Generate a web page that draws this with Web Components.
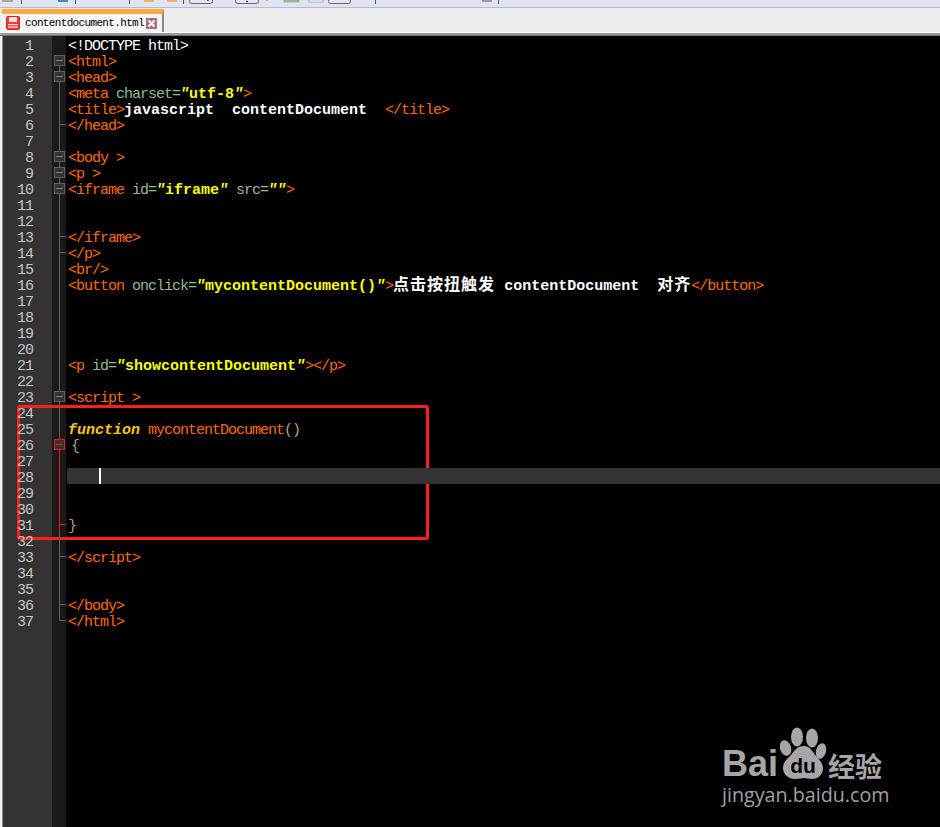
<!doctype html>
<html lang="zh">
<head>
<meta charset="UTF-8">
<title>contentdocument.html</title>
<style>
    html, body { margin: 0; height: 100%; background: #000; }
    body { overflow: hidden; }
</style>
</head>
<body>
<npp-window>
    <npp-toolbar slot="toolbar"></npp-toolbar>
    <npp-tabbar slot="tabs"><npp-tab label="contentdocument.html"></npp-tab></npp-tabbar>
    <npp-editor slot="editor">
        <code-line n="1"><span class="plain">&lt;!DOCTYPE html&gt;</span></code-line>
        <code-line n="2" fold="first"><span class="tag">&lt;html&gt;</span></code-line>
        <code-line n="3" fold="box"><span class="tag">&lt;head&gt;</span></code-line>
        <code-line n="4" fold="line"><span class="tag">&lt;meta </span><span class="attr">charset=</span><span class="q">"</span><span class="str">utf-8</span><span class="q">"</span><span class="tag">&gt;</span></code-line>
        <code-line n="5" fold="line"><span class="tag">&lt;title&gt;</span><span class="txt">javascript  contentDocument  </span><span class="tag">&lt;/title&gt;</span></code-line>
        <code-line n="6" fold="end"><span class="tag">&lt;/head&gt;</span></code-line>
        <code-line n="7" fold="line"></code-line>
        <code-line n="8" fold="box"><span class="tag">&lt;body &gt;</span></code-line>
        <code-line n="9" fold="box"><span class="tag">&lt;p &gt;</span></code-line>
        <code-line n="10" fold="box"><span class="tag">&lt;iframe </span><span class="attr">id=</span><span class="q">"</span><span class="str">iframe</span><span class="q">"</span><span class="attr"> src=</span><span class="q">""</span><span class="tag">&gt;</span></code-line>
        <code-line n="11" fold="line"></code-line>
        <code-line n="12" fold="line"></code-line>
        <code-line n="13" fold="end"><span class="tag">&lt;/iframe&gt;</span></code-line>
        <code-line n="14" fold="end"><span class="tag">&lt;/p&gt;</span></code-line>
        <code-line n="15" fold="line"><span class="tag">&lt;br/&gt;</span></code-line>
        <code-line n="16" fold="line"><span class="tag">&lt;button </span><span class="attr">onclick=</span><span class="q">"</span><span class="str">mycontentDocument()</span><span class="q">"</span><span class="tag">&gt;</span><span class="cjk">点击按扭触发</span><span class="txt"> contentDocument  </span><span class="cjk">对齐</span><span class="tag">&lt;/button&gt;</span></code-line>
        <code-line n="17" fold="line"></code-line>
        <code-line n="18" fold="line"></code-line>
        <code-line n="19" fold="line"></code-line>
        <code-line n="20" fold="line"></code-line>
        <code-line n="21" fold="line"><span class="tag">&lt;p </span><span class="attr">id=</span><span class="q">"</span><span class="str">showcontentDocument</span><span class="q">"</span><span class="tag">&gt;&lt;/p&gt;</span></code-line>
        <code-line n="22" fold="line"></code-line>
        <code-line n="23" fold="box"><span class="tag">&lt;script &gt;</span></code-line>
        <code-line n="24" fold="line"></code-line>
        <code-line n="25" fold="line"><span class="kw">function</span><span class="tag"> mycontentDocument</span><span class="op">()</span></code-line>
        <code-line n="26" fold="redbox"><span class="op brace">{</span></code-line>
        <code-line n="27" fold="redline"></code-line>
        <code-line n="28" fold="redline" current><span class="caret"></span></code-line>
        <code-line n="29" fold="redline"></code-line>
        <code-line n="30" fold="redline"></code-line>
        <code-line n="31" fold="redend"><span class="op">}</span></code-line>
        <code-line n="32" fold="line"></code-line>
        <code-line n="33" fold="end"><span class="tag">&lt;/script&gt;</span></code-line>
        <code-line n="34" fold="line"></code-line>
        <code-line n="35" fold="line"></code-line>
        <code-line n="36" fold="end"><span class="tag">&lt;/body&gt;</span></code-line>
        <code-line n="37" fold="last"><span class="tag">&lt;/html&gt;</span></code-line>
    </npp-editor>
    <red-mark slot="overlay"></red-mark>
    <baidu-mark slot="overlay"></baidu-mark>
</npp-window>
<script>
    class NppWindow extends HTMLElement {
        constructor() {
            super();
            this.attachShadow({mode: 'open'}).innerHTML = `
                <style>
                    :host { display: flex; flex-direction: column; position: relative; width: 940px; height: 827px; overflow: hidden; background: #000; }
                    .rule { height: 4px; flex: none; background: linear-gradient(#ffffff 0 1px, #9a9a9a 1px 3px, #707070 3px); }
                </style>
                <slot name="toolbar"></slot>
                <slot name="tabs"></slot>
                <div class="rule"></div>
                <slot name="editor"></slot>
                <slot name="overlay"></slot>`;
        }
    }

    // only the bottom edge of the toolbar is visible, the icons are cut off by the crop
    class NppToolbar extends HTMLElement {
        constructor() {
            super();
            const seps = [21, 75, 129, 183, 375, 498];
            const sepMarks = seps.map(x => `<rect x="${x}" y="0" width="1" height="4" fill="#555"/>`).join('');
            const framed = [189, 235, 328].map(x => `<path d="M${x + .5} 0v1.5q0 2 2 2h${x === 328 ? 18 : 19}q2 0 2-2V0" fill="#e4e6ee" stroke="#666"/>`).join('');
            this.attachShadow({mode: 'open'}).innerHTML = `
                <style>
                    :host { display: block; height: 8px; flex: none; background: #dfe4f3; box-sizing: border-box; border-bottom: 1px solid #b4bbd4; }
                    svg { display: block; }
                </style>
                <svg width="940" height="7" viewBox="0 0 940 7">
                    ${sepMarks}${framed}
                    <rect x="2" y="0" width="11" height="2" fill="#a9a9a9"/>
                    <rect x="58" y="0" width="10" height="2" fill="#4a86d0"/>
                    <rect x="144" y="0" width="10" height="2" fill="#f0b060"/>
                    <rect x="167" y="0" width="10" height="2" fill="#f0b060"/>
                    <rect x="207" y="0" width="2" height="1" fill="#3060c0"/>
                    <rect x="246" y="1" width="2" height="1" fill="#2020c0"/>
                    <rect x="266" y="0" width="2" height="1" fill="#f0b030"/>
                    <rect x="284" y="0" width="15" height="2" fill="#9cc49a" stroke="#7a8a7a" stroke-width=".5"/>
                    <rect x="309" y="0" width="14" height="2" fill="#fff" stroke="#777" stroke-width=".5"/>
                    <rect x="482" y="0" width="10" height="2" fill="#9c9c9c"/>
                </svg>`;
        }
    }

    class NppTabbar extends HTMLElement {
        constructor() {
            super();
            this.attachShadow({mode: 'open'}).innerHTML = `
                <style>
                    :host { display: flex; height: 24px; flex: none; background: #eeeeee; padding: 1px 0 0 2px; box-sizing: border-box; }
                </style>
                <slot></slot>`;
        }
    }

    class NppTab extends HTMLElement {
        constructor() {
            super();
            this.attachShadow({mode: 'open'}).innerHTML = `
                <style>
                    :host { display: flex; align-items: center; width: 162px; box-sizing: border-box; background: #f6f6f6; border-top: 5px solid #ffa93f; border-right: 2px solid #8a8a8a; padding: 0 5px 0 4px; }
                    .label { font: 11px "Liberation Mono", monospace; letter-spacing: -.65px; color: #000; margin-left: 5px; white-space: pre; flex: 1; }
                    svg { display: block; flex: none; }
                </style>
                <svg width="14" height="14" viewBox="0 0 14 14">
                    <rect x=".5" y=".5" width="13" height="13" rx="1.5" fill="#ee3b3b" stroke="#e02020"/>
                    <rect x="3" y="1" width="8" height="5" fill="#fbe3e3"/>
                    <rect x="2" y="8" width="10" height="1.2" fill="#fbe3e3"/>
                    <rect x="2" y="10.5" width="10" height="1.2" fill="#fbe3e3"/>
                </svg>
                <span class="label"></span>
                <svg width="11" height="11" viewBox="0 0 11 11">
                    <rect width="11" height="11" fill="#a5708c"/>
                    <path d="M2.5 2.5l6 6M8.5 2.5l-6 6" stroke="#fff" stroke-width="2"/>
                </svg>`;
            this.shadowRoot.querySelector('.label').textContent = this.getAttribute('label');
        }
    }

    class NppEditor extends HTMLElement {
        constructor() {
            super();
            this.attachShadow({mode: 'open'}).innerHTML = `
                <style>
                    :host { display: flex; flex-direction: column; flex: 1; min-height: 0; background: #000; position: relative;
                        font: 15px/22px "Liberation Mono", "Noto Sans CJK SC", monospace; letter-spacing: -1px; }
                    .rail { position: absolute; inset: 0 auto 0 0; width: 66px; z-index: 0;
                        background: linear-gradient(90deg, #f2f2f2 0 2px, #8a8a8a 2px 3px, #333 3px 52px, #1a1a1a 52px 66px); }
                    slot { display: block; position: relative; z-index: 1; }
                </style>
                <div class="rail"></div>
                <slot></slot>`;
        }
    }

    const GRAY = '#5f5f5f';
    const RED = '#f01414';

    function foldMark(kind) {
        if (!kind) return '';
        const red = kind.startsWith('red');
        const color = red ? RED : GRAY;
        const k = kind.replace('red', '');
        let out = '';
        if (k === 'first') out += `<path d="M7.5 14V16" stroke="${color}"/>`;
        if (k === 'box' || k === 'line' || k === 'end') out += `<path d="M7.5 0V16" stroke="${color}"/>`;
        if (k === 'last') out += `<path d="M7.5 0V8.5" stroke="${color}"/>`;
        if (k === 'end' || k === 'last') out += `<path d="M7.5 8.5H14" stroke="${color}"/>`;
        if (k === 'box' || k === 'first') {
            out += `<rect x="2.5" y="3.5" width="10" height="10" fill="#333" stroke="${color}"/>`;
            out += `<path d="M4 8.5H11" stroke="${red ? RED : '#808080'}"/>`;
        }
        return `<svg width="14" height="16" viewBox="0 0 14 16">${out}</svg>`;
    }

    class CodeLine extends HTMLElement {
        constructor() {
            super();
            const fold = this.getAttribute('fold');
            this.attachShadow({mode: 'open'}).innerHTML = `
                <style>
                    :host { display: flex; height: 16px; white-space: pre; }
                    .num { width: 33px; flex: none; text-align: right; color: #c4c4c4; }
                    .fold { width: 14px; height: 16px; margin-left: 19px; flex: none; }
                    .fold svg { display: block; }
                    .code { flex: 1; height: 16px; padding-left: 2px; color: #fff; }
                    :host([current]) .code { background: #333; margin-left: 1px; padding-left: 1px; }
                    ::slotted(.plain) { color: #fff; }
                    ::slotted(.tag) { color: #ff6a00; }
                    ::slotted(.attr) { color: #8fbc8f; }
                    ::slotted(.q) { color: #ffff00; font-weight: bold; font-style: italic; letter-spacing: 0; }
                    ::slotted(.str) { color: #ffff00; font-weight: bold; letter-spacing: 0; }
                    ::slotted(.txt) { color: #fff; font-weight: bold; letter-spacing: 0; }
                    ::slotted(.cjk) { color: #fff; font-weight: bold; font-size: 16px; line-height: 0; letter-spacing: 1px; font-family: "Noto Sans CJK SC", sans-serif; }
                    ::slotted(.kw) { color: #ffc800; font-weight: bold; font-style: italic; letter-spacing: 0; }
                    ::slotted(.op) { color: #a8a878; }
                    ::slotted(.brace) { margin-left: 3px; }
                    ::slotted(.caret) { display: inline-block; width: 2px; height: 16px; background: #fff; margin-left: 31px; vertical-align: top; }
                </style>
                <span class="num">${this.getAttribute('n')}</span>
                <span class="fold">${foldMark(fold)}</span>
                <span class="code"><slot></slot></span>`;
        }
    }

    class RedMark extends HTMLElement {
        constructor() {
            super();
            this.attachShadow({mode: 'open'}).innerHTML = `
                <style>
                    :host { display: block; position: absolute; left: 17px; top: 405px; width: 412px; height: 135px; box-sizing: border-box; border: 3px solid #ff2015; border-radius: 3px; }
                </style>`;
        }
    }

    class BaiduMark extends HTMLElement {
        constructor() {
            super();
            this.attachShadow({mode: 'open'}).innerHTML = `
                <style>
                    :host { display: flex; flex-direction: column; position: absolute; left: 722px; top: 727px; width: 170px; color: #a6a6a6; }
                    .top { display: flex; align-items: flex-end; height: 53px; }
                    .bai { font: bold 36px/32px "Liberation Sans", sans-serif; }
                    .paw { display: block; flex: none; margin-left: 2px; }
                    .jy { font: bold 27px/29px "Noto Sans CJK SC", sans-serif; }
                    .url { font: 19.7px/22px "Open Sans", sans-serif; color: #a0a0a0; margin-top: 4px; white-space: nowrap; }
                    text { font: bold 21px "Liberation Sans", sans-serif; fill: #000; }
                </style>
                <div class="top">
                    <span class="bai">Bai</span>
                    <svg class="paw" width="48" height="53" viewBox="0 0 48 53" fill="#a6a6a6">
                        <ellipse cx="17" cy="10" rx="6" ry="9.5"/>
                        <ellipse cx="32" cy="11" rx="6" ry="9.5"/>
                        <ellipse cx="5.5" cy="21" rx="5.5" ry="8" transform="rotate(-18 5.5 21)"/>
                        <ellipse cx="41" cy="24" rx="5" ry="8" transform="rotate(14 41 24)"/>
                        <path d="M24 19c6 0 8 5 12 10 5 5 7 9 7 12 0 6-4 11-11 11-4 0-6-1-8-1s-5 1-9 1C8 52 3 47 3 41c0-5 3-8 7-12 4-4 6-10 14-10z"/>
                        <text x="23" y="46" text-anchor="middle">du</text>
                    </svg>
                    <span class="jy">经验</span>
                </div>
                <div class="url">jingyan.baidu.com</div>`;
        }
    }

    window.customElements.define('npp-window', NppWindow);
    window.customElements.define('npp-toolbar', NppToolbar);
    window.customElements.define('npp-tabbar', NppTabbar);
    window.customElements.define('npp-tab', NppTab);
    window.customElements.define('npp-editor', NppEditor);
    window.customElements.define('code-line', CodeLine);
    window.customElements.define('red-mark', RedMark);
    window.customElements.define('baidu-mark', BaiduMark);
</script>
</body>
</html>
